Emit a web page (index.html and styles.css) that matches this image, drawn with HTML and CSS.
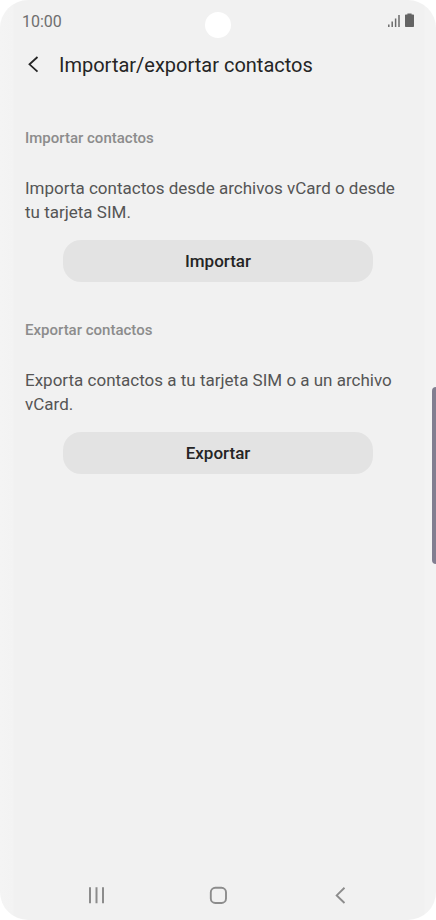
FILE: index.html
```html
<!DOCTYPE html>
<html lang="es">
<head>
    <meta charset="utf-8">
    <meta name="viewport" content="width=device-width, initial-scale=1">
    <title>Importar/exportar contactos</title>
    <link rel="stylesheet" href="styles.css">
</head>
<body>
    <div class="screen">
        <div class="status-bar">
            <span class="time">10:00</span>
            <svg class="status-icons" width="26" height="16" viewBox="0 0 26 16">
                <path d="M.8 11.500V14M4.200 8.500V14M7.600 5.500V14M11 2V14" stroke="#6a6a6a" stroke-width="1.500" fill="none"/>
                <path d="M17 2.200q0-.7.700-.7h1.700V.6h4.200v.9h1.700q.7 0 .7.700V13.300q0 .7-.7.700h-7.600q-.7 0-.7-.7z" fill="#646464"/>
            </svg>
        </div>
        <span class="camera"></span>
        <span class="edge-handle"></span>

        <header class="title-bar">
            <button class="icon-button back" type="button" aria-label="Atrás">
                <svg width="12" height="18" viewBox="0 0 12 18">
                    <path d="M10.500 1L2.500 8.300l8 7.400" stroke="#252525" stroke-width="1.800" fill="none"/>
                </svg>
            </button>
            <h1>Importar/exportar contactos</h1>
        </header>

        <main>
            <section>
                <h2>Importar contactos</h2>
                <p>Importa contactos desde archivos vCard o desde tu tarjeta SIM.</p>
                <button class="button" type="button">Importar</button>
            </section>
            <section>
                <h2>Exportar contactos</h2>
                <p>Exporta contactos a tu tarjeta SIM o a un archivo vCard.</p>
                <button class="button" type="button">Exportar</button>
            </section>
        </main>

        <nav class="nav-bar">
            <button class="icon-button" type="button" aria-label="Recientes">
                <svg width="18" height="18" viewBox="0 0 18 18">
                    <path d="M3 1.300v16M9.500 1.300v16M16 1.300v16" stroke="#8c8c8c" stroke-width="2" fill="none"/>
                </svg>
            </button>
            <button class="icon-button" type="button" aria-label="Inicio">
                <svg width="18" height="18" viewBox="0 0 18 18">
                    <rect x="1.800" y="1.800" width="15.200" height="15.200" rx="4.500" stroke="#8c8c8c" stroke-width="1.900" fill="none"/>
                </svg>
            </button>
            <button class="icon-button" type="button" aria-label="Volver">
                <svg width="18" height="18" viewBox="0 0 18 18">
                    <path d="M13.500 1.700L5.700 9.400l7.800 7.600" stroke="#8c8c8c" stroke-width="1.900" fill="none"/>
                </svg>
            </button>
        </nav>
    </div>
</body>
</html>
```
FILE: styles.css
```css
* {
    box-sizing: border-box;
}
body {
    margin: 0;
    background-color: #fff;
    font-family: Roboto, "Liberation Sans", sans-serif;
    color: #252525;
}
.screen {
    position: relative;
    display: flex;
    flex-direction: column;
    min-height: 100vh;
    padding: 0 25px;
    border-radius: 28px;
    overflow: hidden;
    /* slightly lighter on the curved sides of the glass */
    background: linear-gradient(to right, #f4f4f4 0, #f3f3f3 13px, #f1f1f1 14px, #f1f1f1 calc(100% - 12px), #f3f3f3 calc(100% - 11px));
}
.status-bar {
    display: flex;
    align-items: center;
    justify-content: space-between;
    height: 42px;
    margin: 0 -3px;
}
.time {
    font-size: 16px;
    color: #6e6e6e;
}
.camera {
    position: absolute;
    top: 12px;
    left: 50%;
    width: 26px;
    height: 26px;
    margin-left: -13px;
    border-radius: 50%;
    background-color: #fff;
}
.edge-handle {
    position: absolute;
    top: 387px;
    right: 0;
    width: 4px;
    height: 177px;
    border-radius: 4px 0 0 4px;
    background-color: #817e90;
}
.icon-button {
    display: flex;
    align-items: center;
    justify-content: center;
    padding: 0;
    border: none;
    background: none;
    cursor: pointer;
}
.title-bar {
    display: flex;
    align-items: center;
    height: 46px;
}
.back {
    width: 16px;
    height: 32px;
    margin-right: 18px;
}
h1 {
    margin: 0;
    font-size: 20px;
    font-weight: 400;
    line-height: 28px;
}
main {
    flex: 1;
    padding-top: 40px;
}
section {
    margin-bottom: 38px;
}
h2 {
    margin: 0 0 28px;
    font-size: 15px;
    font-weight: 500;
    line-height: 20px;
    color: #8c8c8c;
}
p {
    margin: 0 0 16px;
    font-size: 17px;
    line-height: 24px;
    color: #555;
}
.button {
    display: block;
    width: calc(100% - 76px);
    height: 42px;
    margin: 0 auto;
    border: none;
    border-radius: 18px;
    background-color: #e3e3e3;
    font-family: inherit;
    font-size: 17px;
    font-weight: 500;
    color: #252525;
    cursor: pointer;
}
.nav-bar {
    display: flex;
    justify-content: space-around;
    align-items: center;
    height: 50px;
    margin: 0 10px;
}
.nav-bar .icon-button {
    width: 48px;
    height: 40px;
}
```
